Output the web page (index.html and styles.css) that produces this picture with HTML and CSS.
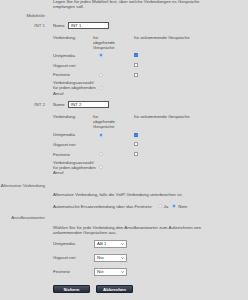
FILE: index.html
```html
<!DOCTYPE html>
<html lang="de">
<head>
  <meta charset="UTF-8" />
  <meta name="viewport" content="width=device-width, initial-scale=1.0" />
  <title>Telefonie - Zuordnung</title>
  <link rel="stylesheet" href="styles.css">
</head>
<body>

  <div class="page">

    <div class="row intro">
      <div class="lbl"></div>
      <p>Legen Sie für jedes Mobilteil fest, über welche Verbindungen es Gespräche<br>empfangen soll.</p>
    </div>

    <!-- Mobilteile -->
    <div class="row head">
      <div class="lbl">Mobilteile</div>
    </div>

    <div class="row hs">
      <div class="lbl">INT 1</div>
      <div class="hs-body">
        <div class="name">Name <span class="text-input">INT 1</span></div>
        <div class="conn">
          <div class="c1">Verbindung</div>
          <div class="c2 th">für<br>abgehende<br>Gespräche</div>
          <div class="c3">für ankommende Gespräche</div>

          <div class="c1">Unitymedia</div>
          <div class="c2"><span class="radio on"></span></div>
          <div class="c3"><span class="check on"><svg viewBox="0 0 10 10"><path d="M2 5.2 L4.2 7.4 L8 2.8" /></svg></span></div>

          <div class="c1">Gigaset.net</div>
          <div class="c2"></div>
          <div class="c3"><span class="check"></span></div>

          <div class="c1">Festnetz</div>
          <div class="c2"><span class="radio"></span></div>
          <div class="c3"><span class="check"></span></div>

          <div class="c1 multi">Verbindungsauswahl<br>für jeden abgehenden<br>Anruf</div>
          <div class="c2"><span class="radio"></span></div>
          <div class="c3"></div>
        </div>
      </div>
    </div>

    <div class="row hs hs2">
      <div class="lbl">INT 2</div>
      <div class="hs-body">
        <div class="name">Name <span class="text-input">INT 2</span></div>
        <div class="conn">
          <div class="c1">Verbindung</div>
          <div class="c2 th">für<br>abgehende<br>Gespräche</div>
          <div class="c3">für ankommende Gespräche</div>

          <div class="c1">Unitymedia</div>
          <div class="c2"><span class="radio on"></span></div>
          <div class="c3"><span class="check on"><svg viewBox="0 0 10 10"><path d="M2 5.2 L4.2 7.4 L8 2.8" /></svg></span></div>

          <div class="c1">Gigaset.net</div>
          <div class="c2"></div>
          <div class="c3"><span class="check"></span></div>

          <div class="c1">Festnetz</div>
          <div class="c2"><span class="radio"></span></div>
          <div class="c3"><span class="check"></span></div>

          <div class="c1 multi">Verbindungsauswahl<br>für jeden abgehenden<br>Anruf</div>
          <div class="c2"><span class="radio"></span></div>
          <div class="c3"></div>
        </div>
      </div>
    </div>

    <!-- Alternative Verbindung -->
    <div class="row head alt-head">
      <div class="lbl">Alternative Verbindung</div>
    </div>

    <div class="row alt">
      <div class="lbl"></div>
      <div>
        <p class="alt-text">Alternative Verbindung, falls die VoIP-Verbindung unterbrochen ist.</p>
        <div class="alt-opt">
          Automatische Ersatzverbindung über das Festnetz:
          <span class="radio"></span><span class="opt">Ja</span>
          <span class="radio on"></span><span class="opt">Nein</span>
        </div>
      </div>
    </div>

    <!-- Anrufbeantworter -->
    <div class="row head ab-head">
      <div class="lbl">Anrufbeantworter</div>
    </div>

    <div class="row ab">
      <div class="lbl"></div>
      <div>
        <p class="ab-text">Wählen Sie für jede Verbindung den Anrufbeantworter zum Aufzeichnen von ankommenden Gesprächen aus.</p>
        <div class="ab-line">
          <span class="ab-lbl">Unitymedia</span>
          <span class="select">AB 1<svg viewBox="0 0 10 6"><path d="M1.5 1.2 L5 4.6 L8.5 1.2" /></svg></span>
        </div>
        <div class="ab-line">
          <span class="ab-lbl">Gigaset.net</span>
          <span class="select">Nie<svg viewBox="0 0 10 6"><path d="M1.5 1.2 L5 4.6 L8.5 1.2" /></svg></span>
        </div>
        <div class="ab-line">
          <span class="ab-lbl">Festnetz</span>
          <span class="select">Nie<svg viewBox="0 0 10 6"><path d="M1.5 1.2 L5 4.6 L8.5 1.2" /></svg></span>
        </div>
        <div class="buttons">
          <button class="btn">Sichern</button>
          <button class="btn">Abbrechen</button>
        </div>
      </div>
    </div>

  </div>

</body>
</html>
```

FILE: styles.css
```css
body {
  margin: 0;
  font-family: 'Liberation Sans', Arial, sans-serif;
  font-size: 4.4px;
  line-height: 5px;
  color: #4a4a4a;
  background-color: #dddddd;
  overflow: hidden;
}

p {
  margin: 0;
}

.page {
  margin-top: -1.5px;
}

.row {
  display: grid;
  grid-template-columns: 45px 1fr;
  column-gap: 8px;
}

.lbl {
  display: flex;
  justify-content: flex-end;
  white-space: nowrap;
  color: #555;
}

.intro p {
  white-space: nowrap;
}

.head {
  margin-top: 4px;
}

.hs {
  margin-top: 4.5px;
}

.hs2 {
  margin-top: 5.5px;
}

.hs .lbl {
  line-height: 7px;
}

.name {
  display: flex;
  align-items: center;
  height: 7px;
  gap: 3px;
}

.text-input {
  display: block;
  box-sizing: border-box;
  width: 41px;
  height: 7px;
  padding: 0 2px;
  line-height: 5px;
  background: #fff;
  border: 1px solid #555;
  color: #333;
}

.conn {
  display: grid;
  grid-template-columns: 40px 39px 1fr;
  margin-top: 5.5px;
}

.conn > div {
  display: flex;
  align-items: center;
  min-height: 9.7px;
}

.conn > .th,
.conn > div:nth-child(-n+3) {
  align-items: flex-start;
  min-height: 0;
  padding-bottom: 1px;
}

.c1.multi {
  white-space: nowrap;
  line-height: 5.3px;
  padding-top: 0.5px;
  min-height: 0;
}

.c2 {
  padding-left: 6px;
}

.c2.th {
  padding-left: 0;
}

.c3 {
  padding-left: 2px;
}

.radio {
  display: inline-block;
  box-sizing: border-box;
  width: 4px;
  height: 4px;
  border-radius: 50%;
  background: #fff;
  border: 0.5px solid #c8c8c8;
}

.radio.on {
  background: #2f86e6;
  border: 1px solid #b9d4f3;
}

.check {
  display: inline-flex;
  box-sizing: border-box;
  width: 4px;
  height: 4px;
  background: #fff;
  border: 0.5px solid #9a9a9a;
}

.check.on {
  background: #2f7fe0;
  border-color: #2f7fe0;
}

.check svg {
  width: 100%;
  height: 100%;
  fill: none;
  stroke: #fff;
  stroke-width: 1.8;
}

.alt-head {
  margin-top: 7.5px;
}

.alt {
  margin-top: 4px;
}

.alt-opt {
  display: flex;
  align-items: center;
  margin-top: 7px;
}

.alt-opt .radio {
  margin-left: 5px;
  margin-right: 2px;
}

.alt-opt .radio.on {
  margin-left: 4px;
}

.ab-head {
  margin-top: 6px;
}

.ab {
  margin-top: 5px;
}

.ab-text {
  width: 160px;
}

.ab-line {
  display: flex;
  align-items: center;
  margin-top: 4.5px;
  height: 9px;
}

.ab-line + .ab-line {
  margin-top: 5px;
}

.ab-lbl {
  width: 41px;
}

.select {
  display: flex;
  align-items: center;
  justify-content: space-between;
  box-sizing: border-box;
  width: 33px;
  height: 8px;
  padding: 0 2px;
  background: #fff;
  border: 0.5px solid #999;
  color: #333;
}

.select svg {
  width: 3px;
  height: 2px;
  fill: none;
  stroke: #444;
  stroke-width: 2;
}

.buttons {
  display: flex;
  gap: 6px;
  margin-top: 9px;
}

.btn {
  box-sizing: border-box;
  width: 37px;
  height: 8px;
  padding: 0;
  border: 0.5px solid #1c232c;
  border-radius: 1px;
  background: linear-gradient(#4a5563, #262e38);
  color: #fff;
  font-family: 'Liberation Sans', Arial, sans-serif;
  font-size: 4.4px;
  font-weight: bold;
  line-height: 7px;
}
```
